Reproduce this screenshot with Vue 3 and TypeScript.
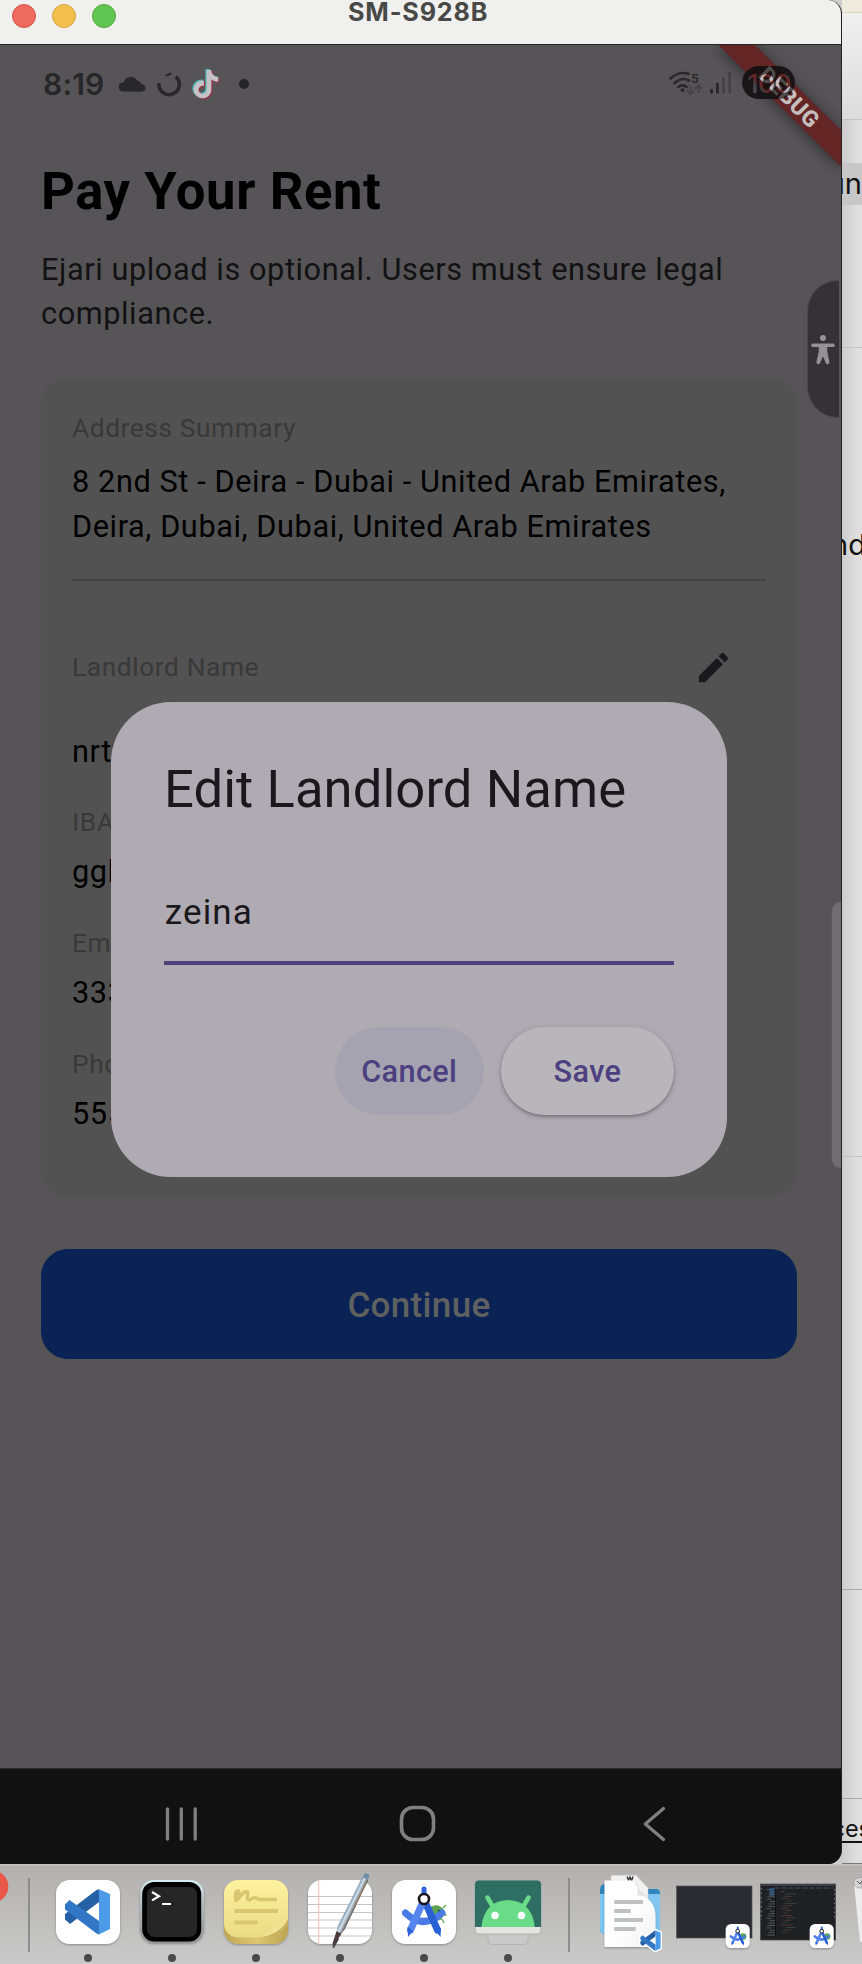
<script setup lang="ts">
import { ref } from 'vue'

interface Field {
  label: string
  value: string
}

const landlordName = ref('zeina')

const fields: Field[] = [
  { label: 'IBAN', value: 'ggh' },
  { label: 'Email', value: '333' },
  { label: 'Phone', value: '555' },
]

const codeLines = Array.from({ length: 18 }, (_, i) => ({
  x: 20 + ((i * 5) % 7),
  y: 7 + i * 2.4,
  w: 4 + ((i * 7) % 9),
  color: ['#4b3f3a', '#35433a', '#573b34', '#3f4146'][i % 4],
}))

const sideLines = Array.from({ length: 20 }, (_, i) => ({
  x: 6 + ((i * 3) % 4),
  y: 5 + i * 2.4,
  w: 5 + ((i * 5) % 4),
}))
</script>

<template>
  <div class="screen">
    <div class="workspace">
      <main class="window">
        <header class="titlebar">
          <div class="lights">
            <i class="light red"></i>
            <i class="light yellow"></i>
            <i class="light green"></i>
          </div>
          <span class="window-title">SM-S928B</span>
        </header>

        <section class="app">
          <div class="statusbar">
            <span class="clock">8:19</span>
            <svg class="cloud" width="28" height="16" viewBox="0 0 28 16">
              <path d="M5 15.5a4.6 4.6 0 0 1-.6-9.1h1.3A7.2 7.2 0 0 1 19 4.6a5.4 5.4 0 0 1 4.4 5 3 3 0 0 1-.4 5.9Z" fill="#28272a" />
              <rect x="16" y="8.5" width="11.5" height="7" rx="3.5" fill="#28272a" />
            </svg>
            <svg class="ring" width="24" height="26" viewBox="0 0 24 26">
              <path d="M18.7 5.6A10.2 10.2 0 1 1 2 12" fill="none" stroke="#28272a" stroke-width="3.4" />
              <path d="M8 5.2Q10.5 1 15.2 1.8Q13.4 5.6 8 5.2Z" fill="#28272a" />
            </svg>
            <svg class="tiktok" width="30" height="34" viewBox="0 0 30 34">
              <defs>
                <path id="note" d="M12.525.02c1.31-.02 2.61-.01 3.91-.02.08 1.53.63 3.09 1.75 4.17 1.12 1.11 2.7 1.62 4.24 1.79v4.03c-1.44-.05-2.89-.35-4.2-.97-.57-.26-1.1-.59-1.62-.93-.01 2.92.01 5.84-.02 8.75-.08 1.4-.54 2.79-1.35 3.94-1.31 1.92-3.58 3.17-5.91 3.21-1.43.08-2.86-.31-4.08-1.03-2.02-1.19-3.44-3.37-3.65-5.71-.02-.5-.03-1-.01-1.49.18-1.9 1.12-3.72 2.58-4.96 1.66-1.44 3.98-2.13 6.15-1.72.02 1.48-.04 2.96-.04 4.44-.99-.32-2.15-.23-3.02.37-.63.41-1.11 1.04-1.36 1.75-.21.51-.15 1.07-.14 1.61.24 1.64 1.82 3.02 3.5 2.87 1.12-.01 2.19-.66 2.77-1.61.19-.33.4-.67.41-1.06.1-1.79.06-3.57.07-5.36.01-4.03-.01-8.05.02-12.07z" />
              </defs>
              <use href="#note" transform="translate(0.5 1) scale(1.18)" fill="#4fb3b4" />
              <use href="#note" transform="translate(3 3) scale(1.18)" fill="#9b3149" />
              <use href="#note" transform="translate(1.8 2) scale(1.18)" fill="#c4c2c4" />
            </svg>
            <i class="more-dot"></i>
            <svg class="signals" width="66" height="26" viewBox="0 0 66 26">
              <g fill="none" stroke="#29282a" stroke-width="2.6" stroke-linecap="round">
                <path d="M1.500 7.500Q10 0 19.500 2.800" />
                <path d="M5.500 12.200Q13 5.500 20 9.500" />
                <path d="M9.300 16Q13.500 12.700 17.700 16" />
              </g>
              <circle cx="13.500" cy="19.200" r="1.900" fill="#29282a" />
              <text x="22" y="11.500" font-size="13.500" font-weight="600" fill="#29282a">5</text>
              <g fill="none" stroke="#454346" stroke-width="2">
                <path d="M21.500 15v8.200M18 19.600l3.500 3.600 3.500-3.600M29.500 22v-7.500M26.100 17.800l3.400-3.500 3.400 3.500" />
              </g>
              <rect x="41" y="18" width="3" height="4.700" rx="1.400" fill="#29282a" />
              <rect x="47" y="11.700" width="3" height="11" rx="1.400" fill="#29282a" />
              <rect x="53" y="6" width="3" height="16.700" rx="1.400" fill="#454346" />
              <rect x="59.200" y="1" width="2.800" height="21.700" rx="1.400" fill="#454346" />
            </svg>
          </div>

          <h1>Pay Your Rent</h1>
          <p class="subtitle">Ejari upload is optional. Users must ensure legal compliance.</p>

          <article class="card">
            <div class="label">Address Summary</div>
            <div class="value address">8 2nd St - Deira - Dubai - United Arab Emirates, Deira, Dubai, Dubai, United Arab Emirates</div>
            <div class="divider"></div>
            <div class="landlord">
              <span class="label wide">Landlord Name</span>
              <svg width="39" height="39" viewBox="0 0 24 24" fill="#1a191b">
                <path d="M3 17.25V21h3.75L17.81 9.94l-3.75-3.75L3 17.25zM20.71 7.04a1 1 0 0 0 0-1.41l-2.34-2.34a1 1 0 0 0-1.41 0l-1.83 1.83 3.75 3.75 1.83-1.83z" />
              </svg>
            </div>
            <div class="value name">nrtv</div>
            <div v-for="f in fields" :key="f.label" class="field">
              <div class="label wide">{{ f.label }}</div>
              <div class="value">{{ f.value }}</div>
            </div>
          </article>

          <button class="continue">Continue</button>

          <svg class="debug" width="149" height="150" viewBox="0 0 149 150">
            <defs>
              <filter id="soft" x="-30%" y="-30%" width="160%" height="160%">
                <feGaussianBlur stdDeviation="7" />
              </filter>
              <mask id="digits">
                <rect width="150" height="150" fill="#fff" />
                <text x="55.500" y="47.500" font-size="26" font-weight="600" letter-spacing="-0.600" fill="#000">100</text>
              </mask>
            </defs>
            <path d="M23 0H63L150 86V126Z" fill="#000" opacity="0.420" filter="url(#soft)" />
            <path d="M26.500 0H63L150 86.300V122.700Z" fill="#642525" />
            <text class="debug-text" x="97.500" y="59.800" text-anchor="middle" transform="rotate(45 97 52)" fill="#c6bfbf">DEBUG</text>
            <rect x="50" y="21" width="53" height="33" rx="16.500" fill="#110f10" opacity="0.870" mask="url(#digits)" />
            <text class="debug-text" x="97.500" y="59.800" text-anchor="middle" transform="rotate(45 97 52)" fill="#c6bfbf" opacity="0.250">DEBUG</text>
          </svg>

          <div class="access">
            <svg width="26" height="32" viewBox="0 0 26 32" fill="#949294" stroke="#949294">
              <circle cx="13" cy="4" r="3" stroke="none" />
              <path d="M3 11.300H23" stroke-width="3.600" stroke-linecap="round" />
              <path d="M9.500 11h7v6.500l2.300 10.600a1.200 1.200 0 0 1-2.300.6L13 20.500 9.400 28.700a1.200 1.200 0 0 1-2.300-.6L9.500 17.500Z" stroke-width="1.400" stroke-linejoin="round" />
            </svg>
          </div>
          <div class="edge-handle"></div>

          <div class="dialog">
            <h2>Edit Landlord Name</h2>
            <input v-model="landlordName" type="text" />
            <div class="underline"></div>
            <div class="actions">
              <button class="cancel">Cancel</button>
              <button class="save">Save</button>
            </div>
          </div>
        </section>

        <nav class="navbar">
          <svg width="842" height="95" viewBox="0 1 842 95" fill="none" stroke="#808080" stroke-width="3.600" stroke-linecap="round">
            <path d="M167.500 41V71M181.300 41V71M195.200 41V71" stroke-width="3.300" />
            <rect x="401.500" y="39.500" width="32" height="32" rx="11.500" />
            <path d="M663.500 40.500L645.300 56L663.500 71.500" stroke-linejoin="round" stroke-width="3.200" />
          </svg>
        </nav>
      </main>

      <aside class="behind">
        <div class="strip s1"></div>
        <div class="strip s2"></div>
        <div class="strip s3"><span>un</span></div>
        <div class="strip s4"></div>
        <div class="strip s5"><span>nd</span></div>
        <div class="strip s6"></div>
        <div class="strip s7"></div>
        <div class="strip s8"><span>ces</span></div>
      </aside>
    </div>

    <footer class="dock">
      <svg width="862" height="100" viewBox="0 0 862 100">
        <defs>
          <linearGradient id="steel" x1="0" x2="0" y1="0" y2="1">
            <stop offset="0" stop-color="#d8eff5" />
            <stop offset="0.3" stop-color="#b7c3c7" />
            <stop offset="1" stop-color="#8d8f90" />
          </linearGradient>
          <linearGradient id="sticky" x1="0" x2="0" y1="0" y2="1">
            <stop offset="0" stop-color="#fef1a0" />
            <stop offset="1" stop-color="#e9dc86" />
          </linearGradient>
          <linearGradient id="gold" x1="0" x2="1">
            <stop offset="0" stop-color="#bfa650" />
            <stop offset="0.5" stop-color="#ddc871" />
            <stop offset="1" stop-color="#bca453" />
          </linearGradient>
          <linearGradient id="pen" x1="0" x2="1">
            <stop offset="0" stop-color="#7d93a5" />
            <stop offset="0.4" stop-color="#cfe2f0" />
            <stop offset="0.7" stop-color="#9ba3a9" />
            <stop offset="1" stop-color="#55504d" />
          </linearGradient>
          <linearGradient id="paper" x1="0" x2="1" y1="0" y2="1">
            <stop offset="0.5" stop-color="#ffffff" />
            <stop offset="1" stop-color="#f1f1f1" />
          </linearGradient>
          <filter id="drop" x="-20%" y="-20%" width="140%" height="150%">
            <feDropShadow dx="0" dy="1" stdDeviation="1" flood-opacity="0.3" />
          </filter>
          <g id="vscode">
            <path d="M9 39.5L14 44 43 22V9.2L40.5 10 9 34Z" fill="#2661a4" />
            <path d="M9 24.5L13.5 20 43 41V54.5L40.5 53.5 9 29.5Z" fill="#3277c6" />
            <path d="M43 9.2L54 14V49L43 54.5Z" fill="#4b9be9" />
          </g>
          <g id="compass">
            <path d="M13.5 33Q31 50 50 33" fill="none" stroke="#4a7ae6" stroke-width="7" stroke-linecap="round" />
            <path d="M32 9V18" stroke="#2f62d8" stroke-width="5" stroke-linecap="round" />
            <path d="M34 24L45.5 50" stroke="#2a60d6" stroke-width="7" stroke-linecap="round" />
            <path d="M30 24L18.5 50" stroke="#5485ee" stroke-width="7" stroke-linecap="round" />
            <path d="M15.5 47L16 57 21 51ZM43.5 51L48.5 57 49 48Z" fill="#2f62d8" />
            <circle cx="32" cy="19" r="5" fill="#fff" stroke="#181818" stroke-width="2.6" />
          </g>
        </defs>

        <rect width="862" height="1.6" fill="#c4c4c3" />
        <circle cx="-8" cy="22.5" r="16.3" fill="#e85748" />
        <rect x="28" y="14" width="2" height="74" fill="#8c8c8c" />
        <rect x="568" y="14" width="2" height="74" fill="#8c8c8c" />

        <g transform="translate(56 16)" filter="url(#drop)">
          <rect width="64" height="64" rx="14" fill="#fff" />
          <use href="#vscode" />
        </g>

        <g transform="translate(140 16)" filter="url(#drop)">
          <rect width="64" height="63" rx="14" fill="url(#steel)" />
          <rect x="2.2" y="2" width="59" height="59.5" rx="12" fill="#000" />
          <rect x="7" y="7" width="50" height="50" rx="7.5" fill="#262626" />
          <path d="M12 12L19 16.2 12 20.4" fill="none" stroke="#fff" stroke-width="2.2" />
          <path d="M22 24H31" stroke="#fff" stroke-width="2" />
        </g>

        <g transform="translate(224 16)" filter="url(#drop)">
          <rect y="8" width="64" height="56" rx="14" fill="url(#gold)" />
          <path d="M0 14A14 14 0 0 1 14 0H50A14 14 0 0 1 64 14V38Q58 54 38 57.500H14A14 14 0 0 1 0 44Z" fill="url(#sticky)" />
          <path d="M64 37Q60 46 50 50Q44 56 34 57.500Q56 58 64 44Z" fill="#c7b35d" />
          <path d="M64 36Q58 44 49 48Q44 55 34 57.500Q56 55 64 39Z" fill="#f0e394" />
          <path d="M12 22Q10 10 14.500 11Q16 13 13.500 20Q22 8 24 13Q22 20 26 20Q30 16 35 19.500H53" fill="none" stroke="#d9c66f" stroke-width="3.400" />
          <path d="M10.500 31H54M10.500 42.500H33.500" stroke="#d9c66f" stroke-width="4" />
        </g>

        <g transform="translate(308 16)">
          <g filter="url(#drop)">
            <rect width="64" height="64" rx="14" fill="#fff" />
          </g>
          <path d="M0 16.500H64M0 24.500H64M0 32.500H64M0 40H64M0 48H64M1.500 56H62.500" stroke="#c5c5c5" stroke-width="1" />
          <path d="M10.700 1V63" stroke="#f5b9b9" />
          <path d="M30 59L25.500 67" stroke="#444" stroke-width="1.800" stroke-linecap="round" />
          <g transform="translate(59.500 -6) rotate(26)">
            <rect x="-2.800" y="0" width="5.600" height="7" rx="2" fill="#6d8fac" />
            <rect x="-3.400" y="5" width="6.800" height="30" rx="1" fill="url(#pen)" />
            <path d="M-3.600 34H3.600L3.800 60L1.500 70H-1.500L-3.800 60Z" fill="url(#pen)" />
            <path d="M-2.800 65H2.800L.8 79H-.8Z" fill="#4a3a39" />
            <path d="M2.600 8V34" stroke="#a87b50" stroke-width="0.800" />
          </g>
        </g>

        <g transform="translate(392 16)" filter="url(#drop)">
          <rect width="64" height="64" rx="14" fill="#fff" />
          <path d="M38 27Q48 22 53 32L49 40Q42 42 38 35Z" fill="#5da451" />
          <path d="M51 28L54 25M52 35H54.500M50 39L52 43" stroke="#5da451" stroke-width="1.300" />
          <circle cx="47" cy="31" r="1.200" fill="#27472a" />
          <circle cx="49" cy="36" r="1.200" fill="#27472a" />
          <use href="#compass" />
        </g>

        <g transform="translate(475 16)">
          <rect x="13" y="52" width="40" height="12.500" rx="4" fill="#c9c9c9" stroke="#aaa" stroke-width="0.600" />
          <rect y="0.500" width="66" height="53.500" rx="4" fill="#e4e3e2" stroke="#8b8b8b" stroke-width="0.500" />
          <path d="M0 47V4Q0 .5 4 .5H62Q66 .5 66 4V47Z" fill="#2f6e63" />
          <path d="M6.500 47Q9 21 33 20Q57 21 59.800 47Z" fill="#6adb88" />
          <path d="M12.500 17.500L18 27M53.500 17.500L48 27" stroke="#6adb88" stroke-width="4.500" stroke-linecap="round" />
          <circle cx="20" cy="35.500" r="3.700" fill="#fff" />
          <circle cx="46.500" cy="35.500" r="3.700" fill="#fff" />
        </g>

        <g transform="translate(600 8)">
          <path d="M0 18Q0 12 5 12H30L34 17H56Q60 17 60 21V55Q60 62 55 62H5Q0 62 0 56Z" fill="#2f86bd" />
          <path d="M0 22H60V56Q60 62 55 62H5Q0 62 0 56Z" fill="#80c6ef" />
          <path d="M11 5Q11 3.300 13 3.300H36L48 16V40H11Z" fill="#f2f2f2" stroke="#cfcfcf" stroke-width="0.500" />
          <path d="M27 4.500L28.500 8L30 5L31.500 9L33 4.500" fill="none" stroke="#333" stroke-width="1.400" />
          <path d="M4.500 8.500H34Q39 15 38 23Q55 26 55.500 44V75H4.500Z" fill="url(#paper)" filter="url(#drop)" />
          <path d="M34 8.500Q36 19 48 23.500H37.500Q39 15 34 8.500Z" fill="#e2e2e2" />
          <path d="M14.300 30H43M14.300 39H30.700M14.300 48H43M14.300 57H35.700" stroke="#bfc1c1" stroke-width="4" />
          <g transform="translate(36.300 54.300) scale(0.450)">
            <use href="#vscode" stroke="#fff" stroke-width="6" stroke-linejoin="round" />
            <use href="#vscode" />
          </g>
        </g>

        <g transform="translate(676.500 22)">
          <rect width="75.500" height="52" fill="#2b2c31" stroke="#55565a" stroke-width="0.700" />
          <g transform="translate(49.200 38)" filter="url(#drop)">
            <rect width="24" height="24" rx="5.500" fill="#fff" />
            <circle cx="17.500" cy="12.500" r="3.200" fill="#5da451" />
            <use href="#compass" transform="scale(0.375)" />
          </g>
        </g>

        <g transform="translate(760.500 20)">
          <rect width="75" height="56" fill="#1e2024" stroke="#44464a" stroke-width="0.700" />
          <rect width="75" height="2" fill="#3c4046" />
          <path d="M14 4H73" stroke="#48525e" stroke-width="1" stroke-dasharray="5 2" />
          <rect x="9" y="4" width="5" height="9" fill="#245078" />
          <rect v-for="l in sideLines" :key="'s' + l.y" :x="l.x" :y="l.y" :width="l.w" height="1" fill="#505357" />
          <rect v-for="l in codeLines" :key="'c' + l.y" :x="l.x" :y="l.y" :width="l.w" height="0.9" :fill="l.color" />
          <path d="M15 5V53" stroke="#111" />
          <path d="M1 4V36M74 5V36" stroke="#777b80" stroke-width="0.900" stroke-dasharray="1.500 3" />
          <g transform="translate(49.200 40)" filter="url(#drop)">
            <rect width="24" height="24" rx="5.500" fill="#fff" />
            <circle cx="17.500" cy="12.500" r="3.200" fill="#5da451" />
            <use href="#compass" transform="scale(0.375)" />
          </g>
        </g>

        <g>
          <path d="M854 20L860 78H862V16Z" fill="#ececec" />
          <path d="M854 21Q853 15 858 14L862 13V24Q857 25 854 21Z" fill="#d6d6d6" stroke="#9a9a9a" stroke-width="0.700" />
          <path d="M857 17L860 20L862 17" stroke="#555" fill="none" />
        </g>

        <circle v-for="x in [88, 172, 256, 340, 424, 508]" :key="x" :cx="x" cy="94" r="4" fill="#4a4a4a" />
      </svg>
    </footer>
  </div>
</template>

<style>
body {
  overflow: hidden;
}
</style>

<style scoped>
.screen {
  width: 862px;
  height: 1964px;
  overflow: hidden;
  display: flex;
  flex-direction: column;
  font-family: Roboto, "Liberation Sans", sans-serif;
}
.workspace {
  display: flex;
  height: 1864px;
  background: linear-gradient(90deg, #cdcdcd 842px, #dfdfdf 858px);
}
.window {
  width: 842px;
  box-sizing: border-box;
  display: flex;
  flex-direction: column;
  border-right: 1px solid #232223;
  border-radius: 0 14px 14px 0;
  overflow: hidden;
  flex: none;
  background: #111;
}
.titlebar {
  height: 44px;
  box-sizing: border-box;
  background: #f0f0ee;
  display: flex;
  align-items: flex-start;
  flex: none;
}
.lights {
  display: flex;
  gap: 16px;
  padding: 4px 0 0 12px;
  width: 337px;
  box-sizing: border-box;
}
.light {
  width: 24px;
  height: 24px;
  box-sizing: border-box;
  border-radius: 50%;
  border: 1px solid;
}
.red { background: #ed6a5f; border-color: #d65347; }
.yellow { background: #f5bf4f; border-color: #d9a23c; }
.green { background: #61c554; border-color: #4fa73f; }
.window-title {
  padding-left: 11px;
  font: 700 25.2px/25px Inter, sans-serif;
  letter-spacing: 0.85px;
  color: #484847;
}
.app {
  position: relative;
  height: 1725px;
  box-sizing: border-box;
  border-top: 1px solid #242324;
  border-bottom: 1px solid #2c2b2c;
  background: #575457;
  padding: 0 44px 0 41px;
  flex: none;
}
.statusbar {
  height: 78px;
  display: flex;
  align-items: center;
  color: #272628;
}
.clock {
  width: 75px;
  padding-left: 2px;
  font: 600 30px/40px Inter, sans-serif;
  letter-spacing: 0.2px;
}
.cloud { margin-right: 10.500px; }
.ring { margin-right: 9.500px; margin-top: -1px; }
.tiktok { margin-top: 1px; }
.more-dot {
  width: 10px;
  height: 10px;
  border-radius: 50%;
  background: #242325;
  margin-left: 18.500px;
}
.signals {
  margin-left: 420.500px;
  flex: none;
}
h1 {
  margin: 37px 0 0;
  font-size: 52.6px;
  line-height: 62px;
  font-weight: 700;
  letter-spacing: 0.6px;
  color: #000;
}
.subtitle {
  margin: 26px 0 0;
  width: 700px;
  font-size: 30.7px;
  line-height: 43.7px;
  letter-spacing: 0.59px;
  color: #121113;
}
.card {
  margin-top: 42.6px;
  width: 756px;
  height: 818px;
  box-sizing: border-box;
  padding: 34px 31px 0;
  border-radius: 26px;
  background: #525252;
}
.label {
  font-size: 26.3px;
  line-height: 32px;
  letter-spacing: 0.58px;
  color: #393939;
}
.label.wide { letter-spacing: 0.6px; }
.value {
  font-size: 30.7px;
  line-height: 44.4px;
  letter-spacing: 0.59px;
  color: #000;
}
.address {
  width: 700px;
  margin-top: 16.4px;
}
.divider {
  height: 2px;
  margin-top: 29.8px;
  background: #424242;
}
.landlord {
  display: flex;
  justify-content: space-between;
  align-items: center;
  height: 32px;
  margin-top: 70px;
  padding-right: 33px;
}
.landlord svg { margin-top: 0; }
.name { margin-top: 46.6px; }
.field { margin-top: 32.3px; }
.field .value { margin-top: 12px; }
button {
  border: 0;
  padding: 0;
  font-family: inherit;
  font-weight: 500;
}
.continue {
  display: block;
  margin-top: 53px;
  padding-top: 2px;
  width: 756px;
  height: 110px;
  border-radius: 27px;
  background: #0b2254;
  color: #5f6160;
  font-size: 35px;
  letter-spacing: 0.33px;
}
.debug {
  position: absolute;
  top: 0;
  left: 692px;
}
.debug text { font-family: Inter, sans-serif; }
.debug .debug-text {
  font-family: Roboto, sans-serif;
  font-size: 22.6px;
  font-weight: 800;
  letter-spacing: 0.6px;
}
.access {
  position: absolute;
  left: 807px;
  top: 235px;
  width: 32px;
  height: 138px;
  box-sizing: border-box;
  border-radius: 31px 0 0 31px;
  border: 1px solid #4a484b;
  border-right: 0;
  background: #343235;
  padding: 53px 0 0 2px;
}
.access svg { display: block; }
.edge-handle {
  position: absolute;
  left: 832px;
  top: 857px;
  width: 9px;
  height: 266px;
  border-radius: 9px 0 0 9px;
  background: #706e71;
  box-shadow: 0 0 2px #6a686b;
}
.dialog {
  position: absolute;
  left: 111px;
  top: 656.5px;
  width: 616px;
  height: 475px;
  box-sizing: border-box;
  padding: 52.8px 53px 0;
  border-radius: 60px;
  background: #b0abb2;
}
h2 {
  margin: 0;
  font-size: 52.6px;
  line-height: 70px;
  font-weight: 400;
  letter-spacing: 0.08px;
  white-space: nowrap;
  color: #1a181c;
}
input {
  display: block;
  width: 100%;
  height: 52.6px;
  margin: 62.4px 0 0;
  padding: 0 0 0 0.8px;
  box-sizing: border-box;
  border: 0;
  outline: 0;
  background: none;
  font: 400 35px/52.6px Roboto, sans-serif;
  letter-spacing: 1.1px;
  color: #1a181c;
}
.underline {
  height: 4.5px;
  margin-top: 21.6px;
  background: #4f417c;
}
.actions {
  display: flex;
  justify-content: flex-end;
  gap: 17.5px;
  margin-top: 61.4px;
}
.actions button {
  height: 88px;
  padding-top: 2px;
  border-radius: 44px;
  font-size: 30.7px;
  letter-spacing: 0.36px;
  color: #4d4080;
}
.cancel {
  width: 148.5px;
  background: #a5a3af;
}
.save {
  width: 173px;
  background: #b8b6bb;
  box-shadow: 0 2px 3px rgba(50, 46, 54, 0.35), 0 1px 6px rgba(50, 46, 54, 0.16);
}
.navbar {
  height: 95px;
  background: #111;
  flex: none;
}
.navbar svg { display: block; }
.behind {
  width: 20px;
  display: flex;
  flex-direction: column;
  overflow: hidden;
}
.strip {
  box-sizing: border-box;
  border-bottom: 1.5px solid #c3c3c3;
  overflow: hidden;
  flex: none;
  color: #111;
  font: 29px/34px Inter, sans-serif;
}
.strip span {
  display: block;
  float: right;
}
.s1 { height: 13px; background: #efebdf; border-color: #dcd3c0; }
.s2 { height: 107px; background: linear-gradient(#f0f0f0, #dcdcdc); }
.s3 { height: 228px; padding-top: 43px; background: linear-gradient(transparent 43px, #c7c7c7 43px 85px, transparent 85px); }
.s3 span { line-height: 42px; }
.s4 { height: 180px; border: 0; }
.s5 { height: 629px; }
.s5 span { margin-right: -4px; }
.s6 { height: 433px; border-color: #aaa; }
.s7 { height: 209px; border-color: #aaa; }
.s8 { height: 65px; padding-top: 13px; border-color: #777; }
.s8 span {
  font-size: 23.5px;
  margin-right: -9px;
  text-decoration: underline;
  text-decoration-thickness: 2px;
  text-underline-offset: 4px;
}
.dock {
  height: 100px;
  background: linear-gradient(#b1b0ae, #cacaca);
}
.dock svg { display: block; }
</style>
